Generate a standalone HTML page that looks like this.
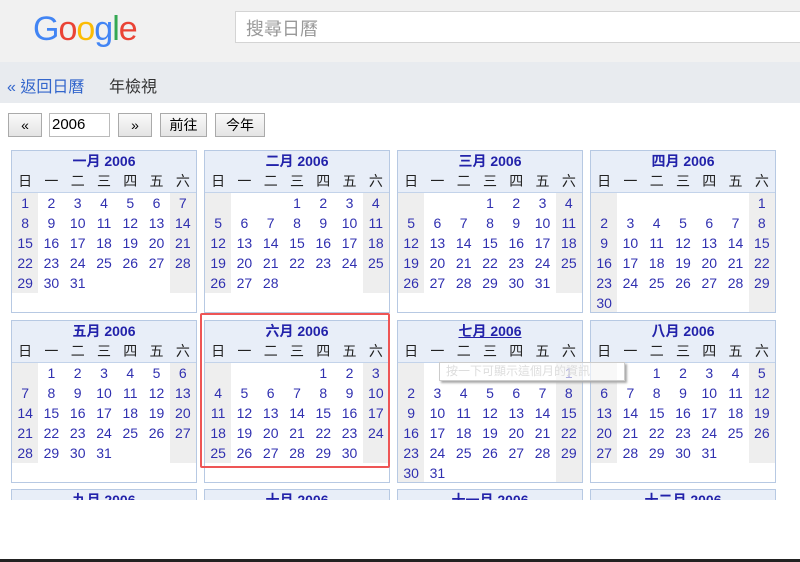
<!DOCTYPE html>
<html style="overflow:hidden"><head><meta charset="utf-8">
<style>
html,body{margin:0;width:800px;height:562px;overflow:hidden}
body{background:#fff;font-family:"Liberation Sans","Noto Sans CJK TC",sans-serif;position:relative}
#top{position:absolute;left:0;top:0;width:800px;height:62px;background:#f1f1f1}
#logo{position:absolute;left:33px;top:11px;font-size:34px;line-height:36px;font-family:"Liberation Sans",sans-serif;letter-spacing:-1px}
#search{position:absolute;left:235px;top:11px;width:565px;height:32px;background:#fff;border:1px solid #d4d4d4;border-right:none;box-sizing:border-box;font-size:18px;color:#999;padding:3px 10px;font-family:"Liberation Sans","Noto Sans CJK TC",sans-serif}
#nav{position:absolute;left:0;top:62px;width:800px;height:41px;background:#e8ebef;font-size:16px}
#nav .a{position:absolute;left:7px;top:11px;color:#3366cc}
#nav .b{position:absolute;left:109px;top:11px;color:#333}
.btn{position:absolute;top:113px;height:24px;border:1px solid #aaa;background:linear-gradient(#fafafa,#e4e4e4);box-sizing:border-box;font-size:14px;text-align:center;line-height:22px;color:#000}
#yr{position:absolute;left:49px;top:113px;width:61px;height:24px;border:1px solid #bbb;box-sizing:border-box;font-size:15px;padding-left:2px;line-height:22px;background:#fff}
.m{position:absolute;width:186px;height:163px;border:1px solid #b7c9e3;box-sizing:border-box;background:#fff;overflow:hidden}
.m .hd{background:#e8eef8;height:41px;border-bottom:1px solid #c3d3ea}
.m .t{height:20px;line-height:20px;text-align:center;font-weight:bold;color:#2222aa;font-size:14px}
.sm{position:absolute;width:186px;height:11px;border:1px solid #b7c9e3;border-bottom:none;box-sizing:border-box;background:#e8eef8;overflow:hidden;text-align:center;font-weight:bold;color:#2222aa;font-size:14px;line-height:20px}
.row{display:flex;height:20px;line-height:20px}
.row div{width:26.4px;text-align:center;font-size:14px}
.dn div{color:#222;font-size:14px}
.d div{color:#3030b0}
.d div.w{background:#eeeeee}
#red{position:absolute;left:200px;top:313px;width:190px;height:155px;border:2px solid #ee5555;box-sizing:border-box;border-radius:2px}
#tip{position:absolute;left:439px;top:362px;width:178px;height:17px;border:1px solid #ccc;background:rgba(255,255,255,.6);font-size:12px;color:#ddd;line-height:17px;padding-left:6px;box-shadow:2px 2px 2px #aaa;overflow:hidden;white-space:nowrap}
#bot{position:absolute;left:0;top:559px;width:800px;height:3px;background:#222}
</style></head><body>
<div id="top">
<div id="logo"><span style="color:#4285f4">G</span><span style="color:#ea4335">o</span><span style="color:#fbbc05">o</span><span style="color:#4285f4">g</span><span style="color:#34a853">l</span><span style="color:#ea4335">e</span></div>
<div id="search">搜尋日曆</div>
</div>
<div id="nav"><span class="a">« 返回日曆</span><span class="b">年檢視</span></div>
<div class="btn" style="left:8px;width:34px">«</div>
<div id="yr">2006</div>
<div class="btn" style="left:118px;width:34px">»</div>
<div class="btn" style="left:160px;width:47px">前往</div>
<div class="btn" style="left:215px;width:50px">今年</div>
<div id="cal"></div>
<div class="sm" style="left:11px;top:489px">九月 2006</div>
<div class="sm" style="left:204px;top:489px">十月 2006</div>
<div class="sm" style="left:397px;top:489px">十一月 2006</div>
<div class="sm" style="left:590px;top:489px">十二月 2006</div>
<div id="red"></div>
<div id="tip">按一下可顯示這個月的資訊</div>
<div id="bot"></div>
<script>
var names=["一月","二月","三月","四月","五月","六月","七月","八月"];
var lefts=[11,204,397,590],tops=[150,320];
var h="";
for(var i=0;i<8;i++){
 var st=new Date(2006,i,1).getDay(),n=new Date(2006,i+1,0).getDate();
 var x=lefts[i%4],y=tops[Math.floor(i/4)];
 h+='<div class="m" style="left:'+x+'px;top:'+y+'px"><div class="hd"><div class="t"'+(i==6?' style="text-decoration:underline"':'')+'>'+names[i]+' 2006</div><div class="row dn"><div>日</div><div>一</div><div>二</div><div>三</div><div>四</div><div>五</div><div>六</div></div></div>';
 var d=1-st;
 for(var r=0;r<6;r++){
  h+='<div class="row d">';
  var any=d<=n;
  for(var c=0;c<7;c++){
   var cls=(any&&(c==0||c==6))?' class="w"':'';
   h+='<div'+cls+'>'+(d>=1&&d<=n?d:'')+'</div>';d++;
  }
  h+='</div>';
 }
 h+='</div>';
}
document.getElementById("cal").innerHTML=h;
</script>
</body></html>
